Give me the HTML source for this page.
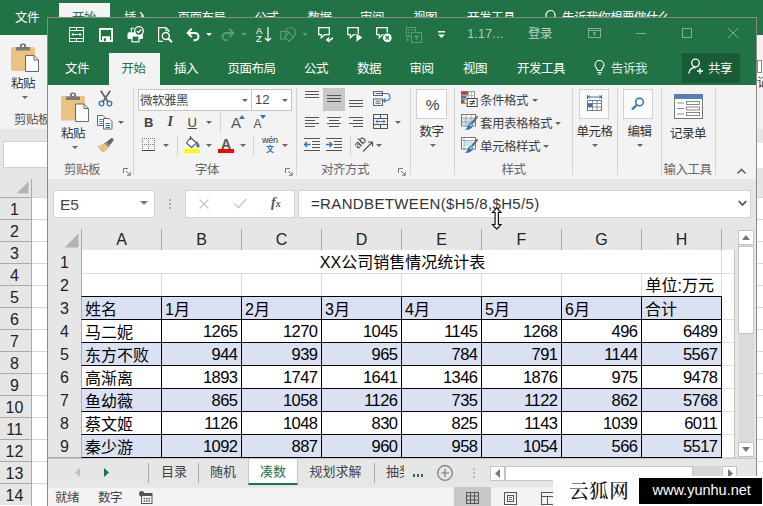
<!DOCTYPE html>
<html lang="zh-CN">
<head>
<meta charset="utf-8">
<title>Excel</title>
<style>
*{box-sizing:border-box;margin:0;padding:0}
html,body{width:763px;height:506px;overflow:hidden;background:#fff}
body{position:relative;font-family:"Liberation Sans","Noto Sans CJK SC",sans-serif;font-size:12px;color:#444;-webkit-font-smoothing:antialiased}
.a{position:absolute}
.t{position:absolute;white-space:nowrap;line-height:1}
.w{color:#fff}
svg{position:absolute;overflow:visible}
/* background window */
#bg{left:0;top:0;width:763px;height:506px;background:#fff;overflow:hidden}
#bgtitle{left:0;top:0;width:763px;height:35px;background:#217346}
#bgtab{left:59px;top:3px;width:51px;height:32px;background:#f3f3f3}
#bgrib{left:0;top:35px;width:763px;height:94px;background:#f3f3f3}
#bgband{left:0;top:129px;width:763px;height:68px;background:#e6e6e6}
.bgt{top:12px;font-size:12.5px;letter-spacing:-.5px;color:#fff}
/* foreground window */
#fg{left:47px;top:17px;width:710px;height:489px;background:#e6e6e6;border:1px solid #8a8a8a;border-bottom:none;overflow:hidden}
#fgi{left:-48px;top:-18px;width:763px;height:506px}
#fgtitle{left:48px;top:18px;width:709px;height:67px;background:#217346}
#fgrib{left:48px;top:85px;width:709px;height:94px;background:#f3f3f3}
.tab{top:62.5px;font-size:12.5px;letter-spacing:-.5px;color:#fff}
.rl{font-size:12px;color:#555}
.sep{position:absolute;width:1px;background:#d4d4d4}
.dd{position:absolute;width:0;height:0;border-left:3px solid transparent;border-right:3px solid transparent;border-top:3px solid #666}
/* grid */
.ch{position:absolute;top:228px;height:22px;font-size:16px;color:#222;text-align:center;line-height:24px}
.rh{position:absolute;left:48px;width:33px;height:24px;font-size:16px;color:#222;text-align:center;line-height:25px}
.c{position:absolute;height:24px;width:81px;border:1px solid #000;font-size:16px;color:#000;line-height:25px;padding:0 3px;white-space:nowrap;overflow:hidden}
.b{background:#d9e1f2}
.n{text-align:right;font-size:16.5px;letter-spacing:-.55px;line-height:23px;padding-right:3.5px}
.f{border-left-color:#ababab}
.st{position:absolute;white-space:nowrap;top:465px;font-size:13px;color:#444;line-height:1}
</style>
</head>
<body>
<div id="bg" class="a">
  <div id="bgtitle" class="a"></div>
  <div id="bgtab" class="a"></div>
  <div id="bgrib" class="a"></div>
  <div id="bgband" class="a"></div>
  <div class="t bgt" style="left:15px">文件</div>
  <div class="t bgt" style="left:72px;color:#217346">开始</div>
  <div class="t bgt" style="left:124px">插入</div>
  <div class="t bgt" style="left:177.5px">页面布局</div>
  <div class="t bgt" style="left:254.5px">公式</div>
  <div class="t bgt" style="left:307.5px">数据</div>
  <div class="t bgt" style="left:360px">审阅</div>
  <div class="t bgt" style="left:413px">视图</div>
  <div class="t bgt" style="left:467px">开发工具</div>
  <div class="t bgt" style="left:562px">告诉我你想要做什么</div>
  <svg style="left:544px;top:9px" width="13" height="16" viewBox="0 0 13 16"><circle cx="6.5" cy="6" r="4.5" fill="none" stroke="#fff" stroke-width="1.2"/><path d="M4.5 12.5h4M5 14.5h3" stroke="#fff" stroke-width="1"/></svg>
  <svg style="left:11px;top:43px" width="30" height="30" viewBox="0 0 30 30">
<rect x="0" y="4" width="24" height="24" rx="2" fill="#eac282"/>
<path d="M5 7.500V5a1 1 0 0 1 1-1h3V2.500a2 2 0 0 1 2-2h2a2 2 0 0 1 2 2V4h3a1 1 0 0 1 1 1V7.500z" fill="#7a7a7a"/><rect x="11" y="2" width="2" height="2" fill="#f3f3f3"/>
<path d="M14.5 12.5h8.5l4.5 4.5v11.5h-13z" fill="#fff" stroke="#6a6a6a" stroke-width="1"/>
<path d="M23 12.5v4.5h4.5" fill="none" stroke="#6a6a6a" stroke-width="1"/>
</svg>
  <div class="t" style="left:11px;top:77.5px;font-size:12.5px;letter-spacing:-.5px;color:#333">粘贴</div>
  <div class="dd" style="left:22px;top:96px"></div>
  <div class="t rl" style="left:14px;top:113.5px;font-size:12.5px;letter-spacing:-.5px">剪贴板</div>
  <div class="a" style="left:757px;top:60px;width:5px;height:13px;border:1px solid #888;background:#fff"></div>
  <div class="t" style="left:757px;top:77px;font-size:12px;color:#333">记</div>
  <div class="a" style="left:3px;top:141px;width:200px;height:27px;background:#fff;border:1px solid #d0d0d0"></div>
  <div class="a" style="left:740px;top:143px;width:30px;height:25px;background:#fff"></div>
  <div class="a" style="left:0;top:176px;width:763px;height:21px;background:#e6e6e6"></div>
  <svg style="left:16px;top:181px" width="13" height="13" viewBox="0 0 13 13"><path d="M12.5 0.5V12.5H0.5z" fill="#b4b4b4"/></svg>
  <div class="a" style="left:31px;top:179px;width:1px;height:18px;background:#ababab"></div>
  <div class="a" style="left:0;top:197px;width:763px;height:309px;background:#fff;background-image:linear-gradient(#d4d4d4,#d4d4d4);background-size:100% 1px;background-repeat:no-repeat"></div>
  <div class="a" style="left:0;top:197px;width:763px;height:1px;background:#d8d8d8"></div>
  <div class="a" style="left:0;top:198px;width:31px;height:21px;background:#e6e6e6;border-top:0"></div>
  <div class="a" style="left:0;top:197px;width:32px;height:1px;background:#ababab"></div>
  <div class="t" style="left:0;top:202px;width:29px;text-align:center;font-size:16px;color:#222">1</div>
  <div class="a" style="left:0;top:219px;width:763px;height:1px;background:#d8d8d8"></div>
  <div class="a" style="left:0;top:220px;width:31px;height:21px;background:#e6e6e6;border-top:0"></div>
  <div class="a" style="left:0;top:219px;width:32px;height:1px;background:#ababab"></div>
  <div class="t" style="left:0;top:224px;width:29px;text-align:center;font-size:16px;color:#222">2</div>
  <div class="a" style="left:0;top:241px;width:763px;height:1px;background:#d8d8d8"></div>
  <div class="a" style="left:0;top:242px;width:31px;height:21px;background:#e6e6e6;border-top:0"></div>
  <div class="a" style="left:0;top:241px;width:32px;height:1px;background:#ababab"></div>
  <div class="t" style="left:0;top:246px;width:29px;text-align:center;font-size:16px;color:#222">3</div>
  <div class="a" style="left:0;top:263px;width:763px;height:1px;background:#d8d8d8"></div>
  <div class="a" style="left:0;top:264px;width:31px;height:21px;background:#e6e6e6;border-top:0"></div>
  <div class="a" style="left:0;top:263px;width:32px;height:1px;background:#ababab"></div>
  <div class="t" style="left:0;top:268px;width:29px;text-align:center;font-size:16px;color:#222">4</div>
  <div class="a" style="left:0;top:285px;width:763px;height:1px;background:#d8d8d8"></div>
  <div class="a" style="left:0;top:286px;width:31px;height:21px;background:#e6e6e6;border-top:0"></div>
  <div class="a" style="left:0;top:285px;width:32px;height:1px;background:#ababab"></div>
  <div class="t" style="left:0;top:290px;width:29px;text-align:center;font-size:16px;color:#222">5</div>
  <div class="a" style="left:0;top:307px;width:763px;height:1px;background:#d8d8d8"></div>
  <div class="a" style="left:0;top:308px;width:31px;height:21px;background:#e6e6e6;border-top:0"></div>
  <div class="a" style="left:0;top:307px;width:32px;height:1px;background:#ababab"></div>
  <div class="t" style="left:0;top:312px;width:29px;text-align:center;font-size:16px;color:#222">6</div>
  <div class="a" style="left:0;top:329px;width:763px;height:1px;background:#d8d8d8"></div>
  <div class="a" style="left:0;top:330px;width:31px;height:21px;background:#e6e6e6;border-top:0"></div>
  <div class="a" style="left:0;top:329px;width:32px;height:1px;background:#ababab"></div>
  <div class="t" style="left:0;top:334px;width:29px;text-align:center;font-size:16px;color:#222">7</div>
  <div class="a" style="left:0;top:351px;width:763px;height:1px;background:#d8d8d8"></div>
  <div class="a" style="left:0;top:352px;width:31px;height:21px;background:#e6e6e6;border-top:0"></div>
  <div class="a" style="left:0;top:351px;width:32px;height:1px;background:#ababab"></div>
  <div class="t" style="left:0;top:356px;width:29px;text-align:center;font-size:16px;color:#222">8</div>
  <div class="a" style="left:0;top:373px;width:763px;height:1px;background:#d8d8d8"></div>
  <div class="a" style="left:0;top:374px;width:31px;height:21px;background:#e6e6e6;border-top:0"></div>
  <div class="a" style="left:0;top:373px;width:32px;height:1px;background:#ababab"></div>
  <div class="t" style="left:0;top:378px;width:29px;text-align:center;font-size:16px;color:#222">9</div>
  <div class="a" style="left:0;top:395px;width:763px;height:1px;background:#d8d8d8"></div>
  <div class="a" style="left:0;top:396px;width:31px;height:21px;background:#e6e6e6;border-top:0"></div>
  <div class="a" style="left:0;top:395px;width:32px;height:1px;background:#ababab"></div>
  <div class="t" style="left:0;top:400px;width:29px;text-align:center;font-size:16px;color:#222">10</div>
  <div class="a" style="left:0;top:417px;width:763px;height:1px;background:#d8d8d8"></div>
  <div class="a" style="left:0;top:418px;width:31px;height:21px;background:#e6e6e6;border-top:0"></div>
  <div class="a" style="left:0;top:417px;width:32px;height:1px;background:#ababab"></div>
  <div class="t" style="left:0;top:422px;width:29px;text-align:center;font-size:16px;color:#222">11</div>
  <div class="a" style="left:0;top:439px;width:763px;height:1px;background:#d8d8d8"></div>
  <div class="a" style="left:0;top:440px;width:31px;height:21px;background:#e6e6e6;border-top:0"></div>
  <div class="a" style="left:0;top:439px;width:32px;height:1px;background:#ababab"></div>
  <div class="t" style="left:0;top:444px;width:29px;text-align:center;font-size:16px;color:#222">12</div>
  <div class="a" style="left:0;top:461px;width:763px;height:1px;background:#d8d8d8"></div>
  <div class="a" style="left:0;top:462px;width:31px;height:21px;background:#e6e6e6;border-top:0"></div>
  <div class="a" style="left:0;top:461px;width:32px;height:1px;background:#ababab"></div>
  <div class="t" style="left:0;top:466px;width:29px;text-align:center;font-size:16px;color:#222">13</div>
  <div class="a" style="left:0;top:483px;width:763px;height:1px;background:#d8d8d8"></div>
  <div class="a" style="left:0;top:484px;width:31px;height:21px;background:#e6e6e6;border-top:0"></div>
  <div class="a" style="left:0;top:483px;width:32px;height:1px;background:#ababab"></div>
  <div class="t" style="left:0;top:488px;width:29px;text-align:center;font-size:16px;color:#222">14</div>
  <div class="a" style="left:31px;top:197px;width:1px;height:309px;background:#ababab"></div>
</div>
<div id="fg" class="a"><div id="fgi" class="a">
  <div id="fgtitle" class="a"></div>
  <div id="fgrib" class="a"></div>
  <svg style="left:69px;top:27px" width="15" height="15" viewBox="0 0 15 15" fill="none" stroke="#fff" stroke-width="1">
<rect x="0.500" y="0.500" width="14" height="14"/><path d="M0.500 3.500h14M0.500 11.500h14M7.500 0.500V3.500M7.500 11.500v3M3 7.500h9" /><path d="M4.500 6L3 7.500 4.500 9M10.500 6L12 7.500 10.500 9"/></svg>
  <svg style="left:99px;top:28px" width="14" height="14" viewBox="0 0 14 14">
<path d="M0.900 0.900h12.200v12.200H0.900z" fill="none" stroke="#fff" stroke-width="1.800"/><rect x="1" y="0" width="12" height="1.600" fill="#fff"/><rect x="3" y="8.300" width="8" height="5.700" fill="#fff"/><rect x="4.800" y="10.200" width="2.200" height="3" fill="#217346"/></svg>
  <svg style="left:127px;top:26px" width="18" height="17" viewBox="0 0 18 17">
<rect x="0.500" y="6.300" width="15.500" height="6.700" rx="1.500" fill="#fff"/><path d="M7 2.300H4.300v3.500" fill="none" stroke="#fff" stroke-width="1.100"/><rect x="5" y="10" width="7" height="5.800" fill="#217346" stroke="#fff" stroke-width="1.200"/>
<circle cx="12" cy="5" r="4.300" fill="#217346" stroke="#fff" stroke-width="1.300"/><path d="M9.900 5l1.600 1.600 2.700-3.100" fill="none" stroke="#fff" stroke-width="1.300"/></svg>
  <svg style="left:158px;top:27px" width="15" height="16" viewBox="0 0 15 16" fill="none" stroke="#fff" stroke-width="1.200">
<path d="M5 14.400H0.600V0.600h7.400l2.800 2.800v1.500"/><path d="M7.800 0.800v2.800h2.800" stroke-width="0.900"/><circle cx="7.800" cy="9" r="3.500" stroke-width="1.400"/><path d="M10.300 11.500l3.700 3.700" stroke-width="2"/></svg>
  <svg style="left:186px;top:28px" width="15" height="13" viewBox="0 0 15 13" fill="none" stroke="#fff" stroke-width="2">
<path d="M5.800 0.800L1.700 4.900l4.100 4.100"/><path d="M2 4.900h6.800a3.700 3.700 0 0 1 0 7.400H7.500"/></svg>
  <div class="dd" style="left:206px;top:33px;border-top-color:#fff"></div>
  <svg style="left:220px;top:28px" width="15" height="13" viewBox="0 0 15 13" fill="none" stroke="#5d9a78" stroke-width="2">
<path d="M9.200 0.800l4.100 4.100-4.100 4.100"/><path d="M13 4.900H6.200a3.700 3.700 0 0 0 0 7.400h1.300"/></svg>
  <div class="dd" style="left:241px;top:33px;border-top-color:#5d9a78"></div>
  <div class="t w" style="left:256px;top:26.500px;font-size:9.500px;line-height:8px">A<br>Z</div>
  <svg style="left:264px;top:27px" width="8" height="15" viewBox="0 0 8 15" fill="none" stroke="#fff" stroke-width="1.2"><path d="M4 0v14M1 11l3 3 3-3"/></svg>
  <svg style="left:280px;top:27px" width="17" height="15" viewBox="0 0 17 15" fill="none" stroke="#5d9a78" stroke-width="1.100">
<rect x="0.600" y="4.500" width="7.500" height="7.500"/><circle cx="10.500" cy="5.500" r="5"/><path d="M9 5.500l4.500 4.500-4.500 4.500-4.500-4.500z" fill="#217346"/></svg>
  <div class="dd" style="left:302px;top:33px;border-top-color:#5d9a78"></div>
  <svg style="left:318px;top:27px" width="16" height="16" viewBox="0 0 16 16"><path d="M0.700 0.700h10.600v7H6.500L3.300 10.800V7.700H0.700z" fill="none" stroke="#fff" stroke-width="1.300"/><path d="M14.700 10.500c-0.500 2.200-2.700 2.800-5.500 2.500" fill="none" stroke="#fff" stroke-width="1.300"/><path d="M11.300 10.500l-2.600 2.400 2.800 2.100" fill="none" stroke="#fff" stroke-width="1.300"/></svg>
  <svg style="left:347px;top:27px" width="16" height="16" viewBox="0 0 16 16"><path d="M0.700 0.700h10.600v7H6.500L3.300 10.800V7.700H0.700z" fill="none" stroke="#fff" stroke-width="1.300"/><path d="M9 5.500l7 5-7 5z" fill="#fff" stroke="#217346" stroke-width="1"/></svg>
  <svg style="left:376px;top:27px" width="16" height="16" viewBox="0 0 16 16"><path d="M0.700 0.700h10.600v7H6.500L3.300 10.800V7.700H0.700z" fill="none" stroke="#fff" stroke-width="1.300"/><circle cx="11.300" cy="10.800" r="4.800" fill="#fff" stroke="#217346" stroke-width="1"/><path d="M9.500 9l3.600 3.600M13.100 9l-3.600 3.600" stroke="#217346" stroke-width="1.300"/></svg>
  <svg style="left:405px;top:27px" width="17" height="16" viewBox="0 0 17 16" fill="none" stroke="#5d9a78" stroke-width="1">
<rect x="1.500" y="0.500" width="9" height="9"/><path d="M3 3h2M6 3h3M3 5.500h2M3 8h2"/><rect x="6.500" y="5.500" width="10" height="10" fill="#217346"/><path d="M8.500 8.500h6l-2.300 2.600v2.400l-1.400-.8v-1.600z" fill="#5d9a78" stroke="none"/><path d="M2.500 11v3.500M0.800 12.800h3.500"/></svg>
  <svg style="left:438px;top:31px" width="7" height="8" viewBox="0 0 7 8"><rect x="0" y="0" width="7" height="1.500" fill="#fff"/><path d="M0 3.500h7L3.500 7z" fill="#fff"/></svg>
  <div class="t" style="left:467px;top:27px;font-size:13px;color:#a9cbb8">1.17...</div>
  <div class="t" style="left:528px;top:27.5px;font-size:12.5px;letter-spacing:-.5px;color:#b9d4c5">登录</div>
  <svg style="left:588px;top:28px" width="13" height="10" viewBox="0 0 13 10" fill="none" stroke="#7fb094" stroke-width="1"><rect x="0.500" y="0.500" width="12" height="9"/><path d="M0.500 2.500h12M6.500 8V4M4.700 5.600l1.800-1.800 1.800 1.800"/></svg>
  <div class="a" style="left:636px;top:33px;width:10px;height:1px;background:#7fb094"></div>
  <div class="a" style="left:682px;top:28px;width:10px;height:10px;border:1px solid #7fb094"></div>
  <svg style="left:728px;top:28px" width="10" height="10" viewBox="0 0 10 10"><path d="M0 0l10 10M10 0L0 10" stroke="#7fb094" stroke-width="1"/></svg>
  <div class="a" style="left:109px;top:53px;width:51px;height:32px;background:#f3f3f3"></div>
  <div class="t tab" style="left:65px">文件</div>
  <div class="t tab" style="left:121.5px;color:#217346">开始</div>
  <div class="t tab" style="left:174px">插入</div>
  <div class="t tab" style="left:227.5px">页面布局</div>
  <div class="t tab" style="left:304px">公式</div>
  <div class="t tab" style="left:357px">数据</div>
  <div class="t tab" style="left:409.5px">审阅</div>
  <div class="t tab" style="left:463px">视图</div>
  <div class="t tab" style="left:517px">开发工具</div>
  <svg style="left:594px;top:60px" width="11" height="15" viewBox="0 0 11 15" fill="none" stroke="#fff" stroke-width="1.100"><path d="M3.500 10.500c0-2-2.500-3-2.500-5.500a4.500 4.500 0 0 1 9 0c0 2.500-2.500 3.500-2.500 5.500z"/><path d="M3.500 12.500h4M4 14.300h3"/></svg>
  <div class="t tab" style="left:611px;color:#dbe9e1">告诉我</div>
  <div class="a" style="left:682px;top:53px;width:58px;height:30px;background:#185c37"></div>
  <svg style="left:688px;top:58px" width="17" height="17" viewBox="0 0 17 17" fill="none" stroke="#fff" stroke-width="1.300"><circle cx="7.500" cy="5" r="3.800"/><path d="M0.800 15.500c0.500-4 3-6 6.700-6"/><path d="M12 10v6M9 13h6"/></svg>
  <div class="t tab" style="left:708px">共享</div>
  <svg style="left:61px;top:92px" width="30" height="32" viewBox="0 0 30 32">
<rect x="0" y="4" width="24" height="24.500" rx="2" fill="#eac282"/>
<path d="M5 8V5.500a1 1 0 0 1 1-1h3V2.500a2 2 0 0 1 2-2h2a2 2 0 0 1 2 2V4.500h3a1 1 0 0 1 1 1V8z" fill="#7a7a7a"/><rect x="11" y="2" width="2" height="2" fill="#f3f3f3"/>
<path d="M14.500 12h8.500l4.500 4.500v13h-13z" fill="#fcfcfc" stroke="#6a6a6a" stroke-width="1"/>
<path d="M23 12v4.500h4.500" fill="none" stroke="#6a6a6a" stroke-width="1"/>
</svg>
  <div class="t" style="left:13px;top:127.75px;width:120px;text-align:center;font-size:12.5px;letter-spacing:-.5px;color:#333">粘贴</div>
  <div class="dd" style="left:71.5px;top:145.5px;border-top-color:#666"></div>
  <svg style="left:98px;top:90px" width="15" height="17" viewBox="0 0 15 17" fill="none">
<path d="M2.800 0.800l7.200 11M12.200 0.800L5 11.800" stroke="#666" stroke-width="1.800"/><circle cx="3.500" cy="13.500" r="2.300" stroke="#2e75b6" stroke-width="1.300" fill="#f3f3f3"/><circle cx="11.500" cy="13.500" r="2.300" stroke="#2e75b6" stroke-width="1.300" fill="#f3f3f3"/></svg>
  <svg style="left:97px;top:115px" width="16" height="15" viewBox="0 0 16 15" fill="#fcfcfc" stroke="#666" stroke-width="1">
<path d="M0.500 0.500h5.500l2.500 2.500v7.500h-8z"/><path d="M2.500 4.500h3M2.500 6.500h3M2.500 8.500h3" stroke="#2e75b6"/><path d="M6.500 3.500h5.500l3 3v7.500h-8.500z"/><path d="M8.500 8.500h4.500M8.500 10.500h4.500M8.500 12.500h4.500" stroke="#2e75b6"/></svg>
  <div class="dd" style="left:118px;top:120.5px;border-top-color:#666"></div>
  <svg style="left:97px;top:137px" width="17" height="17" viewBox="0 0 17 17">
<path d="M14.800 0.800L17 3l-4.500 5.500L9 5.300z" fill="#666"/><path d="M8.500 5L13 9l-1.500 1.600L7 6.600z" fill="#8a8a8a"/><path d="M6.600 6.600l5 4.400L6 15.800 0.300 9.500z" fill="#eac282"/><path d="M6 15.800L3.500 13l1.500 0.500z" fill="#d4a65a"/></svg>
  <div class="t" style="left:22px;top:164.25px;width:120px;text-align:center;font-size:12.5px;letter-spacing:-.5px;color:#666">剪贴板</div>
  <svg style="left:122.5px;top:168px" width="8" height="8" viewBox="0 0 8 8" fill="none" stroke="#777" stroke-width="1"><path d="M0.5 5V0.5H5"/><path d="M3 3l4 4M7.300 4v3.300H4"/></svg>
  <div class="sep" style="left:133px;top:88px;height:87px"></div>
  <div class="a" style="left:138px;top:89px;width:114px;height:22px;background:#fff;border:1px solid #c6c6c6"></div>
  <div class="a" style="left:251px;top:89px;width:41px;height:22px;background:#fff;border:1px solid #c6c6c6"></div>
  <div class="t" style="left:140px;top:94.5px;font-size:12.5px;letter-spacing:-.5px;color:#444">微软雅黑</div>
  <div class="dd" style="left:241.5px;top:98.5px;border-top-color:#666"></div>
  <div class="t" style="left:255px;top:93px;font-size:13px;color:#444">12</div>
  <div class="dd" style="left:281.5px;top:98.5px;border-top-color:#666"></div>
  <div class="t" style="left:144px;top:115.5px;font-size:13px;font-weight:bold;color:#444">B</div>
  <div class="t" style="left:167.5px;top:115px;font-size:14px;font-style:italic;font-family:'Liberation Serif',serif;font-weight:bold;color:#444">I</div>
  <div class="t" style="left:187.5px;top:115.5px;font-size:13px;text-decoration:underline;color:#444">U</div>
  <div class="dd" style="left:206px;top:120.5px;border-top-color:#666"></div>
  <div class="sep" style="left:220px;top:112px;height:21px"></div>
  <div class="t" style="left:231px;top:114.5px;font-size:15px;color:#555">A</div>
  <svg style="left:238.500px;top:114.500px" width="6" height="4" viewBox="0 0 6 4"><path d="M0 4L3 0l3 4z" fill="#2e75b6"/></svg>
  <div class="t" style="left:253.5px;top:118px;font-size:12px;color:#555">A</div>
  <svg style="left:260px;top:115px" width="6" height="4" viewBox="0 0 6 4"><path d="M0 0L3 4l3-4z" fill="#2e75b6"/></svg>
  <svg style="left:142px;top:138px" width="13" height="13" viewBox="0 0 13 13" fill="none" stroke="#777" stroke-width="1" stroke-dasharray="1 1"><path d="M0 0.500h13M0 6.500h13M0.500 0v12M6.500 0v12M12.500 0v12"/><path d="M0 12.500h13" stroke="#444" stroke-dasharray="none"/></svg>
  <div class="dd" style="left:162.5px;top:143.5px;border-top-color:#666"></div>
  <div class="sep" style="left:176.5px;top:136px;height:20px"></div>
  <svg style="left:185px;top:136px" width="16" height="13" viewBox="0 0 16 13" fill="none">
<path d="M5.500 1.500l6 5.500-5 4.500-5-4.500z" fill="#fff" stroke="#555" stroke-width="1.100"/><path d="M5.500 0v4" stroke="#555" stroke-width="1.100"/><path d="M11.500 5c1.500 1.500 3 3.500 3 5a1.500 1.500 0 0 1-3 0z" fill="#2e75b6"/></svg>
  <div class="a" style="left:184px;top:149px;width:16px;height:4px;background:#ffff00"></div>
  <div class="dd" style="left:205.5px;top:143.5px;border-top-color:#666"></div>
  <div class="t" style="left:221px;top:136.5px;font-size:14px;color:#555;font-weight:bold">A</div>
  <div class="a" style="left:218px;top:149px;width:16px;height:4px;background:#ff0000"></div>
  <div class="dd" style="left:239.5px;top:143.5px;border-top-color:#666"></div>
  <div class="sep" style="left:253px;top:136px;height:20px"></div>
  <div class="t" style="left:262px;top:136px;font-size:9px;color:#333;letter-spacing:-0.200px">wén</div>
  <div class="t" style="left:266px;top:145.5px;font-size:8px;color:#2e75b6;font-weight:bold">文</div>
  <div class="dd" style="left:282px;top:143.5px;border-top-color:#666"></div>
  <div class="t" style="left:147px;top:164.25px;width:120px;text-align:center;font-size:12.5px;letter-spacing:-.5px;color:#666">字体</div>
  <svg style="left:285px;top:168px" width="8" height="8" viewBox="0 0 8 8" fill="none" stroke="#777" stroke-width="1"><path d="M0.5 5V0.5H5"/><path d="M3 3l4 4M7.300 4v3.300H4"/></svg>
  <div class="sep" style="left:296px;top:88px;height:87px"></div>
  <svg style="left:305px;top:91px" width="14" height="9" viewBox="0 0 14 9" stroke="#555" stroke-width="1"><path d="M0 0.5h14"/><path d="M0 3.5h14"/><path d="M0 6.5h14"/></svg>
  <div class="a" style="left:323px;top:88px;width:22px;height:23px;background:#c8c8c8"></div>
  <svg style="left:327px;top:95px" width="14" height="9" viewBox="0 0 14 9" stroke="#555" stroke-width="1"><path d="M0 0.5h14"/><path d="M0 3.5h14"/><path d="M0 6.5h14"/></svg>
  <svg style="left:349px;top:100px" width="14" height="9" viewBox="0 0 14 9" stroke="#555" stroke-width="1"><path d="M0 0.5h14"/><path d="M0 3.5h14"/><path d="M0 6.5h14"/></svg>
  <svg style="left:305px;top:116.5px" width="14" height="12" viewBox="0 0 14 12" stroke="#555" stroke-width="1"><path d="M0 0.5h14"/><path d="M0 3.5h10"/><path d="M0 6.5h14"/><path d="M0 9.5h10"/></svg>
  <svg style="left:327px;top:116.5px" width="14" height="12" viewBox="0 0 14 12" stroke="#555" stroke-width="1"><path d="M0.0 0.5h14"/><path d="M2.0 3.5h10"/><path d="M0.0 6.5h14"/><path d="M2.0 9.5h10"/></svg>
  <svg style="left:349px;top:116.5px" width="14" height="12" viewBox="0 0 14 12" stroke="#555" stroke-width="1"><path d="M0 0.5h14"/><path d="M4 3.5h10"/><path d="M0 6.5h14"/><path d="M4 9.5h10"/></svg>
  <svg style="left:373px;top:91px" width="17" height="15" viewBox="0 0 17 15" fill="none" stroke="#666" stroke-width="1">
<rect x="0.500" y="0.500" width="9" height="4"/><rect x="0.500" y="8" width="9" height="6.500"/><path d="M2.500 2.500H14M2.500 10.200h5M2.500 12.300h5" stroke="#2e75b6"/><path d="M13.500 2.500a3.500 3.500 0 0 1 0 7H10.500" stroke="#2e75b6" stroke-width="1.100"/><path d="M12.500 7.300l-2.200 2.200 2.200 2.200" stroke="#2e75b6" stroke-width="1.100"/></svg>
  <svg style="left:373px;top:114px" width="15" height="15" viewBox="0 0 15 15" fill="none" stroke="#555" stroke-width="1">
<rect x="0.500" y="0.500" width="14" height="14"/><path d="M0.500 4.500h14M0.500 10.500h14M7.500 0.500V4.500M7.500 10.500v4"/><path d="M3 7.500h9M4.800 5.700L3 7.500l1.800 1.800M10.200 5.700L12 7.500l-1.800 1.800" stroke="#2e75b6"/></svg>
  <div class="dd" style="left:394.5px;top:120.5px;border-top-color:#666"></div>
  <svg style="left:304px;top:138px" width="16" height="13" viewBox="0 0 16 13" fill="none" stroke="#555" stroke-width="1"><path d="M0 0.500h16M8 3.500h8M8 6.500h8M8 9.500h8M0 12.500h16"/><path d="M0.500 6.500h6M3 4L0.500 6.500 3 9" stroke="#2e75b6" stroke-width="1.400"/></svg>
  <svg style="left:326px;top:138px" width="16" height="13" viewBox="0 0 16 13" fill="none" stroke="#555" stroke-width="1"><path d="M0 0.500h16M8 3.500h8M8 6.500h8M8 9.500h8M0 12.500h16"/><path d="M0 6.500h6M3.500 4L6 6.500 3.500 9" stroke="#2e75b6" stroke-width="1.400"/></svg>
  <div class="sep" style="left:349.5px;top:136px;height:20px"></div>
  <svg style="left:357px;top:137px" width="16" height="16" viewBox="0 0 16 16" fill="none"><text x="0" y="8.500" font-size="11" fill="#333" stroke="none" transform="rotate(-45 5 9)" font-family="Liberation Sans">ab</text><path d="M6 14.500L15 5.500M11 5h4.500v4.500" stroke="#555" stroke-width="1.200"/></svg>
  <div class="dd" style="left:376px;top:143.5px;border-top-color:#666"></div>
  <div class="t" style="left:285px;top:164.25px;width:120px;text-align:center;font-size:12.5px;letter-spacing:-.5px;color:#666">对齐方式</div>
  <svg style="left:398px;top:168px" width="8" height="8" viewBox="0 0 8 8" fill="none" stroke="#777" stroke-width="1"><path d="M0.5 5V0.5H5"/><path d="M3 3l4 4M7.300 4v3.300H4"/></svg>
  <div class="sep" style="left:409.5px;top:88px;height:87px"></div>
  <div class="a" style="left:416px;top:89px;width:31px;height:30px;background:#fafafa;border:1px solid #d0d0d0"></div>
  <div class="t" style="left:372.7px;top:97.3px;width:120px;text-align:center;font-size:15.5px;color:#444">%</div>
  <div class="t" style="left:371.5px;top:125.75px;width:120px;text-align:center;font-size:12.5px;letter-spacing:-.5px;color:#333">数字</div>
  <div class="dd" style="left:430px;top:143.5px;border-top-color:#666"></div>
  <div class="sep" style="left:453.5px;top:88px;height:87px"></div>
  <svg style="left:461px;top:91px" width="17" height="16" viewBox="0 0 17 16">
<rect x="0.500" y="0.500" width="13" height="12" fill="#fff" stroke="#999"/><path d="M7.500 0.500v12M10.500 0.500v12M0.500 4.500h13M0.500 8.500h13" stroke="#aaa" stroke-width="0.800"/>
<rect x="0" y="0.500" width="7.200" height="3.300" fill="#b7472a"/><rect x="0" y="4.700" width="5.500" height="3" fill="#4472c4"/><rect x="0" y="8.600" width="3.600" height="3.600" fill="#b7472a"/>
<rect x="6.200" y="7.500" width="10" height="8" fill="#fff" stroke="#444"/><path d="M8.500 10.500h5.500M8.500 12.700h5.500M12.700 9l-2.800 5.200" stroke="#333" stroke-width="0.900"/></svg>
  <div class="t" style="left:480px;top:94.5px;font-size:12.5px;letter-spacing:-.5px;color:#444">条件格式</div>
  <div class="dd" style="left:531.5px;top:98.5px;border-top-color:#666"></div>
  <svg style="left:461px;top:114px" width="17" height="17" viewBox="0 0 17 17">
<rect x="0.500" y="0.500" width="14" height="11.500" fill="#fff" stroke="#777"/><rect x="1" y="4" width="13" height="7.500" fill="#c3ebee"/><path d="M5 0.500v11.500M10 0.500v11.500M0.500 4h14M0.500 8h14" stroke="#999" stroke-width="0.800"/>
<path d="M16.300 1.200l-6.300 7.300 1.800 1.600 5-6.500z" fill="#666"/><path d="M9.700 8.700l2 1.800c0.500 1.500-0.500 3.500-2.500 4.500s-4.500 1-5.500 0.500c2-0.500 2.500-2 3-3.500s1.500-3 3-3.300z" fill="#2e75b6"/><circle cx="9.800" cy="11.300" r="1" fill="#dce9f5"/></svg>
  <div class="t" style="left:480px;top:117.5px;font-size:12.5px;letter-spacing:-.5px;color:#444">套用表格格式</div>
  <div class="dd" style="left:555px;top:121.5px;border-top-color:#666"></div>
  <svg style="left:461px;top:137px" width="17" height="17" viewBox="0 0 17 17">
<rect x="0.500" y="0.500" width="14" height="11.500" fill="#fff" stroke="#777"/><rect x="3" y="4" width="9" height="5" fill="#c3ebee"/><path d="M0.500 3.500h14M3 0.500v11.500" stroke="#999" stroke-width="0.800"/>
<path d="M16.300 1.200l-6.300 7.300 1.800 1.600 5-6.500z" fill="#666"/><path d="M9.700 8.700l2 1.800c0.500 1.500-0.500 3.500-2.500 4.500s-4.500 1-5.500 0.500c2-0.500 2.500-2 3-3.500s1.500-3 3-3.300z" fill="#2e75b6"/><circle cx="9.800" cy="11.300" r="1" fill="#dce9f5"/></svg>
  <div class="t" style="left:480px;top:140.5px;font-size:12.5px;letter-spacing:-.5px;color:#444">单元格样式</div>
  <div class="dd" style="left:543px;top:144.5px;border-top-color:#666"></div>
  <div class="t" style="left:453.5px;top:164.25px;width:120px;text-align:center;font-size:12.5px;letter-spacing:-.5px;color:#666">样式</div>
  <div class="sep" style="left:571.5px;top:88px;height:87px"></div>
  <div class="a" style="left:579px;top:89px;width:30px;height:30px;background:#fafafa;border:1px solid #d0d0d0"></div>
  <svg style="left:587px;top:95px" width="15" height="16" viewBox="0 0 15 16" fill="none">
<path d="M0.500 0v4M14.500 0v4M1 2h13" stroke="#2e75b6"/><path d="M3 0.500L1 2l2 1.500M12 0.500L14 2l-2 1.500" stroke="#2e75b6" stroke-width="0.800"/><rect x="0.500" y="5.500" width="14" height="10" fill="#fff" stroke="#777"/><path d="M5.500 5.500v10M10 5.500v10M0.500 8.500h14M0.500 12h14" stroke="#777" stroke-width="0.800"/><rect x="1" y="8.500" width="4.500" height="3.500" fill="#2e75b6"/></svg>
  <div class="t" style="left:534.5px;top:125.75px;width:120px;text-align:center;font-size:12.5px;letter-spacing:-.5px;color:#333">单元格</div>
  <div class="dd" style="left:591.5px;top:143.5px;border-top-color:#666"></div>
  <div class="sep" style="left:616.5px;top:88px;height:87px"></div>
  <div class="a" style="left:623px;top:89px;width:30px;height:30px;background:#fafafa;border:1px solid #d0d0d0"></div>
  <svg style="left:631px;top:97px" width="14" height="14" viewBox="0 0 14 14" fill="none" stroke="#2e75b6"><circle cx="8.500" cy="5" r="3.800" stroke-width="1.500"/><path d="M5.500 8l-4.500 4.500" stroke-width="2.200"/></svg>
  <div class="t" style="left:579.5px;top:125.75px;width:120px;text-align:center;font-size:12.5px;letter-spacing:-.5px;color:#333">编辑</div>
  <div class="dd" style="left:637px;top:143.5px;border-top-color:#666"></div>
  <div class="sep" style="left:660.5px;top:88px;height:87px"></div>
  <svg style="left:674px;top:94px" width="29" height="25" viewBox="0 0 29 25">
<rect x="0.500" y="0.500" width="28" height="24" fill="#fff" stroke="#777"/><rect x="0.500" y="0.500" width="28" height="4.500" fill="#4f81bd"/>
<path d="M3 9h7M3 14.500h7M3 20h7" stroke="#888"/><rect x="12.500" y="7.500" width="13" height="3" fill="#fff" stroke="#888"/><rect x="12.500" y="13" width="13" height="3" fill="#fff" stroke="#888"/><rect x="12.500" y="18.500" width="13" height="3" fill="#fff" stroke="#888"/></svg>
  <div class="t" style="left:628px;top:128.25px;width:120px;text-align:center;font-size:12.5px;letter-spacing:-.5px;color:#333">记录单</div>
  <div class="t" style="left:627.5px;top:164.25px;width:120px;text-align:center;font-size:12.5px;letter-spacing:-.5px;color:#666">输入工具</div>
  <div class="sep" style="left:715px;top:88px;height:87px"></div>
  <svg style="left:737px;top:168px" width="9" height="6" viewBox="0 0 9 6" fill="none" stroke="#666" stroke-width="1.600"><path d="M0.500 5.500l4-4 4 4"/></svg>
  <div class="a" style="left:53px;top:190px;width:102px;height:28px;background:#fff;border:1px solid #d4d4d4"></div>
  <div class="t" style="left:60px;top:196.5px;font-size:15.5px;color:#444">E5</div>
  <svg style="left:140px;top:200.500px" width="8" height="4" viewBox="0 0 8 4"><path d="M0 0h8L4 4z" fill="#777"/></svg>
  <div class="a" style="left:169px;top:199px;width:2px;height:2px;background:#aaa;box-shadow:0 4px 0 #aaa,0 8px 0 #aaa"></div>
  <div class="a" style="left:185px;top:190px;width:110px;height:28px;background:#fff;border:1px solid #d4d4d4"></div>
  <svg style="left:199px;top:199px" width="10" height="10" viewBox="0 0 10 10"><path d="M0.500 0.500l9 9M9.500 0.500l-9 9" stroke="#c4c4c4" stroke-width="1.300"/></svg>
  <svg style="left:234px;top:198px" width="13" height="11" viewBox="0 0 13 11"><path d="M0.800 6l3.700 3.700L12.200 1" fill="none" stroke="#c4c4c4" stroke-width="1.500"/></svg>
  <div class="t" style="left:271px;top:196px;font-size:14px;color:#555;font-style:italic;font-family:'Liberation Serif',serif;font-weight:bold">f<span style="font-size:10px">x</span></div>
  <div class="a" style="left:298px;top:190px;width:453px;height:28px;background:#fff;border:1px solid #d4d4d4"></div>
  <div class="t" style="left:311px;top:196px;font-size:15px;letter-spacing:.36px;color:#333">=RANDBETWEEN($H5/8,$H5/5)</div>
  <svg style="left:738px;top:200px" width="9" height="7" viewBox="0 0 9 7" fill="none" stroke="#555" stroke-width="1.800"><path d="M0.800 1l3.700 4 3.700-4"/></svg>
  <svg style="left:492px;top:207px;z-index:5" width="10" height="24" viewBox="0 0 10 24"><path d="M4.750 0.800L9 5.500H6.400V17.500H9L4.750 22.200 0.500 17.500H3.100V5.500H0.500z" fill="#fff" stroke="#111" stroke-width="1.200"/></svg>
  <div class="a" style="left:48px;top:228px;width:709px;height:22px;background:#e6e6e6"></div>
  <svg style="left:63.500px;top:232.500px" width="15" height="15" viewBox="0 0 15 15"><path d="M14.500 0.500V14.500H0.500z" fill="#b4b4b4"/></svg>
  <div class="ch" style="left:81px;width:81px">A</div>
  <div class="a" style="left:81px;top:229px;width:1px;height:21px;background:#ababab"></div>
  <div class="ch" style="left:161px;width:81px">B</div>
  <div class="a" style="left:161px;top:229px;width:1px;height:21px;background:#ababab"></div>
  <div class="ch" style="left:241px;width:81px">C</div>
  <div class="a" style="left:241px;top:229px;width:1px;height:21px;background:#ababab"></div>
  <div class="ch" style="left:321px;width:81px">D</div>
  <div class="a" style="left:321px;top:229px;width:1px;height:21px;background:#ababab"></div>
  <div class="ch" style="left:401px;width:81px">E</div>
  <div class="a" style="left:401px;top:229px;width:1px;height:21px;background:#ababab"></div>
  <div class="ch" style="left:481px;width:81px">F</div>
  <div class="a" style="left:481px;top:229px;width:1px;height:21px;background:#ababab"></div>
  <div class="ch" style="left:561px;width:81px">G</div>
  <div class="a" style="left:561px;top:229px;width:1px;height:21px;background:#ababab"></div>
  <div class="ch" style="left:641px;width:81px">H</div>
  <div class="a" style="left:641px;top:229px;width:1px;height:21px;background:#ababab"></div>
  <div class="a" style="left:721px;top:229px;width:1px;height:21px;background:#ababab"></div>
  <div class="a" style="left:48px;top:250px;width:687px;height:1px;background:#ababab"></div>
  <div class="a" style="left:81px;top:250px;width:654px;height:208px;background:#fff"></div>
  <div class="a" style="left:161px;top:273px;width:1px;height:23px;background:#dcdcdc"></div>
  <div class="a" style="left:241px;top:273px;width:1px;height:23px;background:#dcdcdc"></div>
  <div class="a" style="left:321px;top:273px;width:1px;height:23px;background:#dcdcdc"></div>
  <div class="a" style="left:401px;top:273px;width:1px;height:23px;background:#dcdcdc"></div>
  <div class="a" style="left:481px;top:273px;width:1px;height:23px;background:#dcdcdc"></div>
  <div class="a" style="left:561px;top:273px;width:1px;height:23px;background:#dcdcdc"></div>
  <div class="a" style="left:641px;top:273px;width:1px;height:23px;background:#dcdcdc"></div>
  <div class="a" style="left:721px;top:250px;width:1px;height:208px;background:#dcdcdc"></div>
  <div class="a" style="left:81px;top:273px;width:654px;height:1px;background:#dcdcdc"></div>
  <div class="a" style="left:721px;top:319px;width:14px;height:1px;background:#dcdcdc"></div>
  <div class="a" style="left:721px;top:342px;width:14px;height:1px;background:#dcdcdc"></div>
  <div class="a" style="left:721px;top:365px;width:14px;height:1px;background:#dcdcdc"></div>
  <div class="a" style="left:721px;top:388px;width:14px;height:1px;background:#dcdcdc"></div>
  <div class="a" style="left:721px;top:411px;width:14px;height:1px;background:#dcdcdc"></div>
  <div class="a" style="left:721px;top:434px;width:14px;height:1px;background:#dcdcdc"></div>
  <div class="a" style="left:721px;top:457px;width:14px;height:1px;background:#dcdcdc"></div>
  <div class="a" style="left:734px;top:250px;width:1px;height:208px;background:#c0c0c0"></div>
  <div class="rh" style="top:250px;background:#e6e6e6">1</div>
  <div class="a" style="left:48px;top:273px;width:33px;height:1px;background:#ababab"></div>
  <div class="rh" style="top:273px;background:#e6e6e6">2</div>
  <div class="a" style="left:48px;top:296px;width:33px;height:1px;background:#ababab"></div>
  <div class="rh" style="top:296px;background:#e6e6e6">3</div>
  <div class="a" style="left:48px;top:319px;width:33px;height:1px;background:#ababab"></div>
  <div class="rh" style="top:319px;background:#e6e6e6">4</div>
  <div class="a" style="left:48px;top:342px;width:33px;height:1px;background:#ababab"></div>
  <div class="rh" style="top:342px;background:#e6e6e6">5</div>
  <div class="a" style="left:48px;top:365px;width:33px;height:1px;background:#ababab"></div>
  <div class="rh" style="top:365px;background:#e6e6e6">6</div>
  <div class="a" style="left:48px;top:388px;width:33px;height:1px;background:#ababab"></div>
  <div class="rh" style="top:388px;background:#e6e6e6">7</div>
  <div class="a" style="left:48px;top:411px;width:33px;height:1px;background:#ababab"></div>
  <div class="rh" style="top:411px;background:#e6e6e6">8</div>
  <div class="a" style="left:48px;top:434px;width:33px;height:1px;background:#ababab"></div>
  <div class="rh" style="top:434px;background:#e6e6e6">9</div>
  <div class="a" style="left:48px;top:457px;width:33px;height:1px;background:#ababab"></div>
  <div class="a" style="left:81px;top:229px;width:1px;height:229px;background:#ababab"></div>
  <div class="t" style="left:82.5px;top:254.5px;width:640px;text-align:center;font-size:16px;color:#000">XX公司销售情况统计表</div>
  <div class="t" style="left:641.5px;top:278px;width:80px;font-size:16px;color:#000;padding-left:4px">单位:万元</div>
  <div class="c b f" style="left:81px;top:296px">姓名</div>
  <div class="c b" style="left:161px;top:296px">1月</div>
  <div class="c b" style="left:241px;top:296px">2月</div>
  <div class="c b" style="left:321px;top:296px">3月</div>
  <div class="c b" style="left:401px;top:296px">4月</div>
  <div class="c b" style="left:481px;top:296px">5月</div>
  <div class="c b" style="left:561px;top:296px">6月</div>
  <div class="c b" style="left:641px;top:296px">合计</div>
  <div class="c f" style="left:81px;top:319px">马二妮</div>
  <div class="c n" style="left:161px;top:319px">1265</div>
  <div class="c n" style="left:241px;top:319px">1270</div>
  <div class="c n" style="left:321px;top:319px">1045</div>
  <div class="c n" style="left:401px;top:319px">1145</div>
  <div class="c n" style="left:481px;top:319px">1268</div>
  <div class="c n" style="left:561px;top:319px">496</div>
  <div class="c n" style="left:641px;top:319px">6489</div>
  <div class="c b f" style="left:81px;top:342px">东方不败</div>
  <div class="c b n" style="left:161px;top:342px">944</div>
  <div class="c b n" style="left:241px;top:342px">939</div>
  <div class="c b n" style="left:321px;top:342px">965</div>
  <div class="c b n" style="left:401px;top:342px">784</div>
  <div class="c b n" style="left:481px;top:342px">791</div>
  <div class="c b n" style="left:561px;top:342px">1144</div>
  <div class="c b n" style="left:641px;top:342px">5567</div>
  <div class="c f" style="left:81px;top:365px">高渐离</div>
  <div class="c n" style="left:161px;top:365px">1893</div>
  <div class="c n" style="left:241px;top:365px">1747</div>
  <div class="c n" style="left:321px;top:365px">1641</div>
  <div class="c n" style="left:401px;top:365px">1346</div>
  <div class="c n" style="left:481px;top:365px">1876</div>
  <div class="c n" style="left:561px;top:365px">975</div>
  <div class="c n" style="left:641px;top:365px">9478</div>
  <div class="c b f" style="left:81px;top:388px">鱼幼薇</div>
  <div class="c b n" style="left:161px;top:388px">865</div>
  <div class="c b n" style="left:241px;top:388px">1058</div>
  <div class="c b n" style="left:321px;top:388px">1126</div>
  <div class="c b n" style="left:401px;top:388px">735</div>
  <div class="c b n" style="left:481px;top:388px">1122</div>
  <div class="c b n" style="left:561px;top:388px">862</div>
  <div class="c b n" style="left:641px;top:388px">5768</div>
  <div class="c f" style="left:81px;top:411px">蔡文姬</div>
  <div class="c n" style="left:161px;top:411px">1126</div>
  <div class="c n" style="left:241px;top:411px">1048</div>
  <div class="c n" style="left:321px;top:411px">830</div>
  <div class="c n" style="left:401px;top:411px">825</div>
  <div class="c n" style="left:481px;top:411px">1143</div>
  <div class="c n" style="left:561px;top:411px">1039</div>
  <div class="c n" style="left:641px;top:411px">6011</div>
  <div class="c b f" style="left:81px;top:434px">秦少游</div>
  <div class="c b n" style="left:161px;top:434px">1092</div>
  <div class="c b n" style="left:241px;top:434px">887</div>
  <div class="c b n" style="left:321px;top:434px">960</div>
  <div class="c b n" style="left:401px;top:434px">958</div>
  <div class="c b n" style="left:481px;top:434px">1054</div>
  <div class="c b n" style="left:561px;top:434px">566</div>
  <div class="c b n" style="left:641px;top:434px">5517</div>
  <div class="a" style="left:738px;top:230px;width:16px;height:228px;background:#dbdbdb"></div>
  <div class="a" style="left:738px;top:230px;width:16px;height:15px;background:#fff;border:1px solid #c4c4c4"></div>
  <svg style="left:742px;top:235px" width="8" height="5" viewBox="0 0 8 5"><path d="M0 5L4 0l4 5z" fill="#777"/></svg>
  <div class="a" style="left:738px;top:246px;width:16px;height:88px;background:#fff;border:1px solid #c4c4c4"></div>
  <div class="a" style="left:738px;top:442px;width:16px;height:15px;background:#fff;border:1px solid #c4c4c4"></div>
  <svg style="left:742px;top:447px" width="8" height="5" viewBox="0 0 8 5"><path d="M0 0L4 5l4-5z" fill="#777"/></svg>
  <div class="a" style="left:48px;top:458px;width:709px;height:29px;background:#e6e6e6"></div>
  <div class="a" style="left:48px;top:458px;width:709px;height:1px;background:#c6c6c6"></div>
  <svg style="left:75px;top:468px" width="5" height="9" viewBox="0 0 5 9"><path d="M5 0L0 4.500 5 9z" fill="#c0c0c0"/></svg>
  <svg style="left:104px;top:468px" width="5" height="9" viewBox="0 0 5 9"><path d="M0 0l5 4.500L0 9z" fill="#217346"/></svg>
  <div class="a" style="left:148px;top:463px;width:1px;height:20px;background:#ababab"></div>
  <div class="a" style="left:198px;top:463px;width:1px;height:20px;background:#ababab"></div>
  <div class="a" style="left:374px;top:463px;width:1px;height:20px;background:#ababab"></div>
  <div class="a" style="left:248px;top:459px;width:50px;height:26px;background:#fff;border-bottom:2px solid #217346;border-left:1px solid #c6c6c6;border-right:1px solid #c6c6c6"></div>
  <div class="st" style="left:161px;color:#444">目录</div>
  <div class="st" style="left:210px;color:#444">随机</div>
  <div class="st" style="left:260px;color:#217346">凑数</div>
  <div class="st" style="left:309.5px;color:#444">规划求解</div>
  <div class="st" style="left:386px;width:18px;overflow:hidden">抽奖</div>
  <div class="a" style="left:412.5px;top:474px;width:2.5px;height:2.5px;background:#217346;box-shadow:4px 0 0 #217346,8px 0 0 #217346"></div>
  <svg style="left:437px;top:465px" width="16" height="16" viewBox="0 0 16 16" fill="none" stroke="#777" stroke-width="1.200"><circle cx="8" cy="8" r="7.300"/><path d="M8 4v8M4 8h8"/></svg>
  <div class="a" style="left:473px;top:468px;width:2px;height:2px;background:#b8b8b8;box-shadow:0 4px 0 #b8b8b8,0 8px 0 #b8b8b8"></div>
  <div class="a" style="left:490px;top:466px;width:15px;height:15px;background:#fff;border:1px solid #c4c4c4"></div>
  <svg style="left:495px;top:469px" width="5" height="9" viewBox="0 0 5 9"><path d="M5 0L0 4.500 5 9z" fill="#777"/></svg>
  <div class="a" style="left:505px;top:466px;width:188px;height:15px;background:#fff;border:1px solid #c4c4c4"></div>
  <div class="a" style="left:693px;top:466px;width:28px;height:15px;background:#d6d6d6"></div>
  <div class="a" style="left:722px;top:466px;width:15px;height:15px;background:#fff;border:1px solid #c4c4c4"></div>
  <svg style="left:728px;top:469px" width="5" height="9" viewBox="0 0 5 9"><path d="M0 0l5 4.500L0 9z" fill="#777"/></svg>
  <div class="a" style="left:48px;top:487px;width:709px;height:19px;background:#f3f3f3;border-top:1px solid #ececec"></div>
  <div class="t" style="left:55px;top:492px;font-size:12.5px;letter-spacing:-.5px;color:#444">就绪</div>
  <div class="t" style="left:98px;top:492px;font-size:12.5px;letter-spacing:-.5px;color:#444">数字</div>
  <svg style="left:139px;top:491px" width="14" height="13" viewBox="0 0 14 13"><rect x="2.500" y="2.500" width="10.500" height="10" fill="#fff" stroke="#555"/><rect x="2.500" y="2.500" width="10.500" height="2.500" fill="#555"/><circle cx="2.700" cy="2.700" r="2.700" fill="#555"/><path d="M4.500 7.500h1.600M7 7.500h1.600M9.500 7.500h1.600M4.500 10h1.600M7 10h1.600M9.500 10h1.600" stroke="#555" stroke-width="1.400"/></svg>
  <div class="a" style="left:454px;top:487px;width:37px;height:19px;background:#c8c8c8"></div>
  <svg style="left:466px;top:492px" width="13" height="12" viewBox="0 0 13 12" fill="none" stroke="#555"><rect x="0.500" y="0.500" width="12" height="11"/><path d="M4.500 0.500v11M8.500 0.500v11M0.500 4h12M0.500 8h12"/></svg>
  <svg style="left:504px;top:492px" width="13" height="13" viewBox="0 0 13 13" fill="none" stroke="#555"><rect x="0.500" y="0.500" width="12" height="12"/><rect x="3.500" y="3.500" width="6" height="6"/><path d="M5 5.500h3M5 7.500h3" stroke-width="0.800"/></svg>
  <svg style="left:541px;top:492px" width="13" height="13" viewBox="0 0 13 13" fill="none" stroke="#555"><rect x="0.500" y="0.500" width="12" height="12"/><path d="M0.500 4.500h12M6.500 4.500v8"/></svg>
</div></div>
<div class="a" style="left:553px;top:476px;width:210px;height:30px;background:#fff"></div>
<div class="a" style="left:639px;top:478px;width:123px;height:26px;background:#000"></div>
<div class="t" style="left:569px;top:481.5px;font-size:19.5px;letter-spacing:.6px;font-weight:500;color:#111;font-family:'Liberation Serif','Noto Serif CJK SC',serif">云狐网</div>
<div class="t" style="left:652.5px;top:482.5px;font-size:14.5px;color:#fff">www.yunhu.net</div>
</body>
</html>
